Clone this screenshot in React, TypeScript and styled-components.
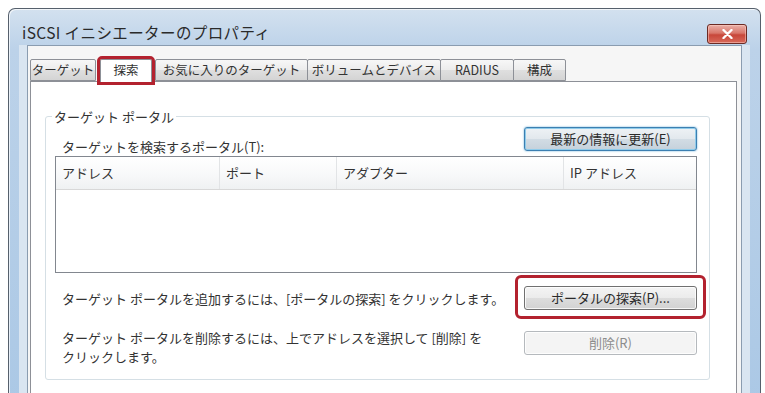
import styled, { createGlobalStyle } from 'styled-components'

const GlobalStyle = createGlobalStyle`
  html, body {
    margin: 0;
    padding: 0;
    background: #ffffff;
    overflow: hidden;
  }
  body {
    width: 765px;
    height: 393px;
    font-family: "Noto Sans CJK JP", "Noto Sans", sans-serif;
    color: #333333;
  }
`

const Desktop = styled.div`
  box-sizing: border-box;
  height: 393px;
  padding: 8px 0 0 8px;
  overflow: hidden;
`

const Window = styled.div`
  box-sizing: border-box;
  width: 753px;
  height: 440px;
  border: 1px solid #56606c;
  border-bottom: none;
  border-radius: 7px 7px 0 0;
  background: linear-gradient(180deg, #d3e1ef 0%, #bcd2e9 40px, #a9c7e5 100%);
  box-shadow: inset 1px 1px 0 rgba(255, 255, 255, 0.7);
`

const TitleBar = styled.div`
  box-sizing: border-box;
  height: 36px;
  padding: 10px 13px 0 13px;
  display: flex;
  align-items: center;
  justify-content: space-between;
`

const Title = styled.div`
  font-size: 15.5px;
  letter-spacing: 0.4px;
  color: #2a2a2a;
`

const CloseButton = styled.div`
  box-sizing: border-box;
  width: 40px;
  height: 20px;
  margin-top: 4px;
  border: 1px solid #6b2a24;
  border-radius: 3px;
  background: linear-gradient(180deg, #eab0a8 0%, #d9766a 45%, #c8473a 55%, #d8695a 100%);
  box-shadow: inset 0 0 0 1px rgba(255, 210, 200, 0.5);
  display: flex;
  align-items: center;
  justify-content: center;
`

const Client = styled.div`
  box-sizing: border-box;
  margin: 0 18px;
  height: 400px;
  border: 1px solid #8a9cb0;
  background: #f6f6f6;
  padding: 9px 3px 0 2px;
  box-shadow: -8px 0 0 #d9e5f1, 8px 0 0 #d9e5f1;
`

const TabStrip = styled.div`
  display: flex;
  align-items: flex-end;
  height: 26px;
  position: relative;
  z-index: 1;
`

const Tab = styled.div<{ $w: number; $active?: boolean }>`
  box-sizing: border-box;
  width: ${(p) => p.$w}px;
  height: ${(p) => (p.$active ? 23 : 22)}px;
  margin: ${(p) => (p.$active ? '0 4px -1px 4px' : '0 0 0 -1px')};
  border: 1px solid #8d9097;
  border-bottom: ${(p) => (p.$active ? 'none' : '1px solid #8d9097')};
  border-radius: 2px 2px 0 0;
  background: ${(p) =>
    p.$active ? '#ffffff' : 'linear-gradient(180deg, #f7f7f7 0%, #ececec 50%, #dfdfdf 51%, #d4d4d4 100%)'};
  outline: ${(p) => (p.$active ? '3px solid #b3222f' : 'none')};
  outline-offset: 0;
  font-size: 12.5px;
  line-height: 20px;
  text-align: center;
  white-space: nowrap;
  color: #333;
  &:first-child {
    margin-left: 0;
  }
`

const TabPanel = styled.div`
  box-sizing: border-box;
  width: 707px;
  height: 360px;
  background: #ffffff;
  border: 1px solid #8d9097;
  padding: 26px 0 0 14px;
`

const GroupBox = styled.fieldset`
  box-sizing: border-box;
  width: 665px;
  margin: 0;
  padding: 0 12px 13px 9px;
  border: 1px solid #d5dfe5;
  border-radius: 3px;
  box-shadow: inset 1px 1px 0 #ffffff;
  display: flex;
  flex-direction: column;
`

const Legend = styled.legend`
  margin-left: -3px;
  padding: 0 2px;
  font-size: 13px;
  line-height: 17px;
`

const TopRow = styled.div`
  display: flex;
  align-items: flex-end;
  justify-content: space-between;
  height: 25px;
  margin-top: 1px;
`

const Label = styled.div`
  padding-left: 7px;
  font-size: 13px;
  line-height: 16px;
  margin-bottom: -4px;
`

const Button = styled.div<{ $variant?: 'default' | 'disabled'; $mt?: number }>`
  box-sizing: border-box;
  width: 173px;
  height: 24px;
  margin-top: ${(p) => p.$mt || 0}px;
  border-radius: 3px;
  font-size: 13px;
  line-height: 22px;
  text-align: center;
  border: 1px solid ${(p) => (p.$variant === 'disabled' ? '#b5b9bd' : p.$variant === 'default' ? '#3c7fb1' : '#707070')};
  color: ${(p) => (p.$variant === 'disabled' ? '#8c8c8c' : '#2a2a2a')};
  background: ${(p) =>
    p.$variant === 'disabled'
      ? '#f4f4f4'
      : p.$variant === 'default'
        ? 'linear-gradient(180deg, #eef2f5 0%, #e2e8ed 50%, #d2dce4 51%, #c5d1db 100%)'
        : 'linear-gradient(180deg, #f4f4f4 0%, #ebebeb 50%, #dddddd 51%, #d2d2d2 100%)'};
  box-shadow: ${(p) =>
    p.$variant === 'default' ? 'inset 0 0 0 1px #8fcbea, 0 0 2px #5ea9d6' : 'inset 0 0 0 1px rgba(255,255,255,0.8)'};
`

const ListView = styled.div`
  box-sizing: border-box;
  margin-top: 5px;
  height: 117px;
  border: 1px solid #82878f;
  background: #ffffff;
`

const ListHeader = styled.div`
  display: grid;
  grid-template-columns: 164px 117px 227px 1fr;
  height: 32px;
  border-bottom: 1px solid #d8d8d8;
  background: linear-gradient(180deg, #ffffff 0%, #f7f8f9 60%, #eff1f2 100%);
`

const HeaderCell = styled.div`
  padding-left: 6px;
  font-size: 13px;
  line-height: 32px;
  color: #333;
  border-right: 1px solid #e2e4e6;
  &:last-child {
    border-right: none;
  }
`

const ActionRow = styled.div<{ $gap: number; $align?: string }>`
  display: flex;
  justify-content: space-between;
  align-items: ${(p) => p.$align || 'center'};
  margin-top: ${(p) => p.$gap}px;
`

const Hint = styled.div`
  padding-left: 7px;
  font-size: 13px;
  line-height: 19px;
`

const Highlight = styled.div`
  margin: -11px -9px -9px -9px;
  padding: 8px 6px 6px 6px;
  border: 3px solid #b3222f;
  border-radius: 6px;
`

const CloseGlyph = () => (
  <svg width="11" height="10" viewBox="0 0 11 10">
    <path d="M1.5 1 L9.5 9 M9.5 1 L1.5 9" stroke="#ffffff" strokeWidth="2.4" strokeLinecap="round" />
  </svg>
)

const tabs = [
  { label: 'ターゲット', w: 66 },
  { label: '探索', w: 52, active: true },
  { label: 'お気に入りのターゲット', w: 153 },
  { label: 'ボリュームとデバイス', w: 134 },
  { label: 'RADIUS', w: 74 },
  { label: '構成', w: 53 },
]

const columns = ['アドレス', 'ポート', 'アダプター', 'IP アドレス']

const App = () => {
  return (
    <>
      <GlobalStyle />
      <Desktop>
        <Window>
          <TitleBar>
            <Title>iSCSI イニシエーターのプロパティ</Title>
            <CloseButton>
              <CloseGlyph />
            </CloseButton>
          </TitleBar>
          <Client>
            <TabStrip>
              {tabs.map((t) => (
                <Tab key={t.label} $w={t.w} $active={t.active}>
                  {t.label}
                </Tab>
              ))}
            </TabStrip>
            <TabPanel>
              <GroupBox>
                <Legend>ターゲット ポータル</Legend>
                <TopRow>
                  <Label>ターゲットを検索するポータル(T):</Label>
                  <Button $variant="default">最新の情報に更新(E)</Button>
                </TopRow>
                <ListView>
                  <ListHeader>
                    {columns.map((c) => (
                      <HeaderCell key={c}>{c}</HeaderCell>
                    ))}
                  </ListHeader>
                </ListView>
                <ActionRow $gap={13}>
                  <Hint>ターゲット ポータルを追加するには、[ポータルの探索] をクリックします。</Hint>
                  <Highlight>
                    <Button>ポータルの探索(P)...</Button>
                  </Highlight>
                </ActionRow>
                <ActionRow $gap={18} $align="flex-start">
                  <Hint>
                    ターゲット ポータルを削除するには、上でアドレスを選択して [削除] を
                    <br />
                    クリックします。
                  </Hint>
                  <Button $variant="disabled" $mt={3}>
                    削除(R)
                  </Button>
                </ActionRow>
              </GroupBox>
            </TabPanel>
          </Client>
        </Window>
      </Desktop>
    </>
  )
}

export default App
